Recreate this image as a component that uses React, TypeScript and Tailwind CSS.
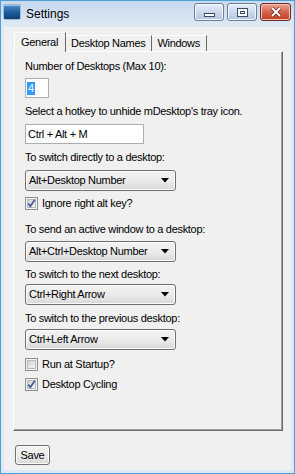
import React from 'react';

function Combo({ value }: { value: string }) {
  return (
    <div className="flex h-[21px] w-[151px] items-center justify-between rounded-[3px] border border-[#707070] bg-gradient-to-b from-[#f3f3f3] via-[#ebebeb] to-[#d9d9d9] pl-[3px] pr-[6px] shadow-[inset_0_0_0_1px_#fbfbfb]">
      <span>{value}</span>
      <svg width="8" height="5" viewBox="0 0 8 5">
        <path d="M0 0h8L4 4.5z" fill="#000" />
      </svg>
    </div>
  );
}

function Check({ checked, label }: { checked: boolean; label: string }) {
  return (
    <div className="flex items-center gap-[4px]">
      <div className="flex h-[13px] w-[13px] items-center justify-center border border-[#8e8f8f] bg-[#f4f4f4]">
        <div className="flex h-[9px] w-[9px] items-center justify-center border border-[#b5b9c0] bg-gradient-to-br from-[#cfd2d6] to-[#f5f5f5]">
          {checked && (
            <svg width="9" height="9" viewBox="0 0 9 9" className="overflow-visible">
              <path d="M1.2 4.6 L3.4 7.2 L7.8 0.8" stroke="#4a5f97" strokeWidth="1.8" fill="none" />
            </svg>
          )}
        </div>
      </div>
      <span>{label}</span>
    </div>
  );
}

function CaptionButton({ kind }: { kind: 'min' | 'max' | 'close' }) {
  if (kind === 'close') {
    return (
      <div className="flex h-[18px] w-[31px] items-center justify-center rounded-[3px] border border-[#6b2f28] bg-gradient-to-b from-[#e8a593] via-[#d3654c] to-[#c13d22] shadow-[inset_0_0_0_1px_#f2c0b3]">
        <svg width="12" height="10" viewBox="0 0 12 10">
          <path d="M2 1 L10 9 M10 1 L2 9" stroke="#5a2418" strokeWidth="3.2" />
          <path d="M2 1 L10 9 M10 1 L2 9" stroke="#fff" strokeWidth="1.8" />
        </svg>
      </div>
    );
  }
  return (
    <div className="flex h-[18px] w-[30px] items-center justify-center rounded-[3px] border border-[#6f7f96] bg-gradient-to-b from-[#e6eef8] via-[#cbdaec] to-[#b2c6df] shadow-[inset_0_0_0_1px_#f1f6fc]">
      {kind === 'min' ? (
        <div className="mt-[6px] h-[4px] w-[11px] border border-[#3c4d66] bg-white" />
      ) : (
        <div className="flex h-[9px] w-[11px] items-center justify-center border border-[#3c4d66] bg-white">
          <div className="h-[3px] w-[5px] border border-[#3c4d66]" />
        </div>
      )}
    </div>
  );
}

export default function App() {
  return (
    <div className="h-[474px] w-[295px] overflow-hidden border border-[#4f9fd6] bg-[#dde8f4] font-['Liberation_Sans',Arial,sans-serif] text-[11px] leading-[13px] tracking-[-0.3px] text-black">
      {/* Title bar */}
      <div className="flex h-[26px] items-start bg-gradient-to-b from-[#c6d9ee] to-[#dfe9f5] pl-[2px] pr-[2px] pt-[2px]">
        <div className="mt-[1px] h-[16px] w-[18px] rounded-[2px] border border-[#9fb8d2] bg-gradient-to-b from-[#4e8fc9] via-[#1f5f9e] to-[#123f72] shadow-[inset_0_1px_0_#8fc2ee]" />
        <span className="ml-[5px] mt-[4px] text-[12px] leading-[14px] tracking-normal">Settings</span>
        <div className="ml-auto mr-[1px] flex gap-[3px]">
          <CaptionButton kind="min" />
          <CaptionButton kind="max" />
          <CaptionButton kind="close" />
        </div>
      </div>

      {/* Client area */}
      <div className="mx-[3px] h-[443px] bg-[#f0f0f0] pl-[9px] pr-[8px] pt-[5px]">
        {/* Tabs */}
        <div className="flex h-[19px] items-end">
          <div className="relative z-10 -mb-px ml-px flex h-[20px] items-center border-l border-t border-r border-l-white border-t-white border-r-[#696969] bg-[#f0f0f0] pl-[6px] pr-[7px]">
            General
          </div>
          <div className="flex h-[16px] items-center border-t border-r border-t-white border-r-[#696969] pl-[5px] pr-[6px]">
            Desktop Names
          </div>
          <div className="flex h-[16px] items-center border-t border-r border-t-white border-r-[#696969] pl-[5px] pr-[6px]">
            Windows
          </div>
        </div>

        {/* Tab page */}
        <div className="flex h-[380px] flex-col border border-l-white border-t-white border-r-[#696969] border-b-[#696969] pl-[11px] pt-[8px] shadow-[inset_-1px_-1px_0_#a0a0a0]">
          <div>Number of Desktops (Max 10):</div>
          <div className="mt-[5px] flex h-[20px] w-[24px] items-center border border-[#abadb3] bg-white pl-[1px]">
            <span className="bg-[#3399ff] px-px text-white">4</span>
          </div>

          <div className="mt-[7px]">Select a hotkey to unhide mDesktop's tray icon.</div>
          <div className="mt-[6px] flex h-[20px] w-[119px] items-center border border-[#abadb3] bg-white pl-[2px]">
            Ctrl + Alt + M
          </div>

          <div className="mt-[7px]">To switch directly to a desktop:</div>
          <div className="mt-[6px]">
            <Combo value="Alt+Desktop Number" />
          </div>
          <div className="mt-[6px]">
            <Check checked label="Ignore right alt key?" />
          </div>

          <div className="mt-[13px]">To send an active window to a desktop:</div>
          <div className="mt-[5px]">
            <Combo value="Alt+Ctrl+Desktop Number" />
          </div>

          <div className="mt-[6px]">To switch to the next desktop:</div>
          <div className="mt-[3px]">
            <Combo value="Ctrl+Right Arrow" />
          </div>

          <div className="mt-[7px]">To switch to the previous desktop:</div>
          <div className="mt-[4px]">
            <Combo value="Ctrl+Left Arrow" />
          </div>

          <div className="mt-[8px]">
            <Check checked={false} label="Run at Startup?" />
          </div>
          <div className="mt-[7px]">
            <Check checked label="Desktop Cycling" />
          </div>
        </div>

        <div className="mt-[14px] ml-[2px] flex h-[20px] w-[35px] items-center justify-center rounded-[3px] border border-[#707070] bg-gradient-to-b from-[#f3f3f3] via-[#ebebeb] to-[#d9d9d9] shadow-[inset_0_0_0_1px_#fbfbfb]">
          Save
        </div>
      </div>
    </div>
  );
}
